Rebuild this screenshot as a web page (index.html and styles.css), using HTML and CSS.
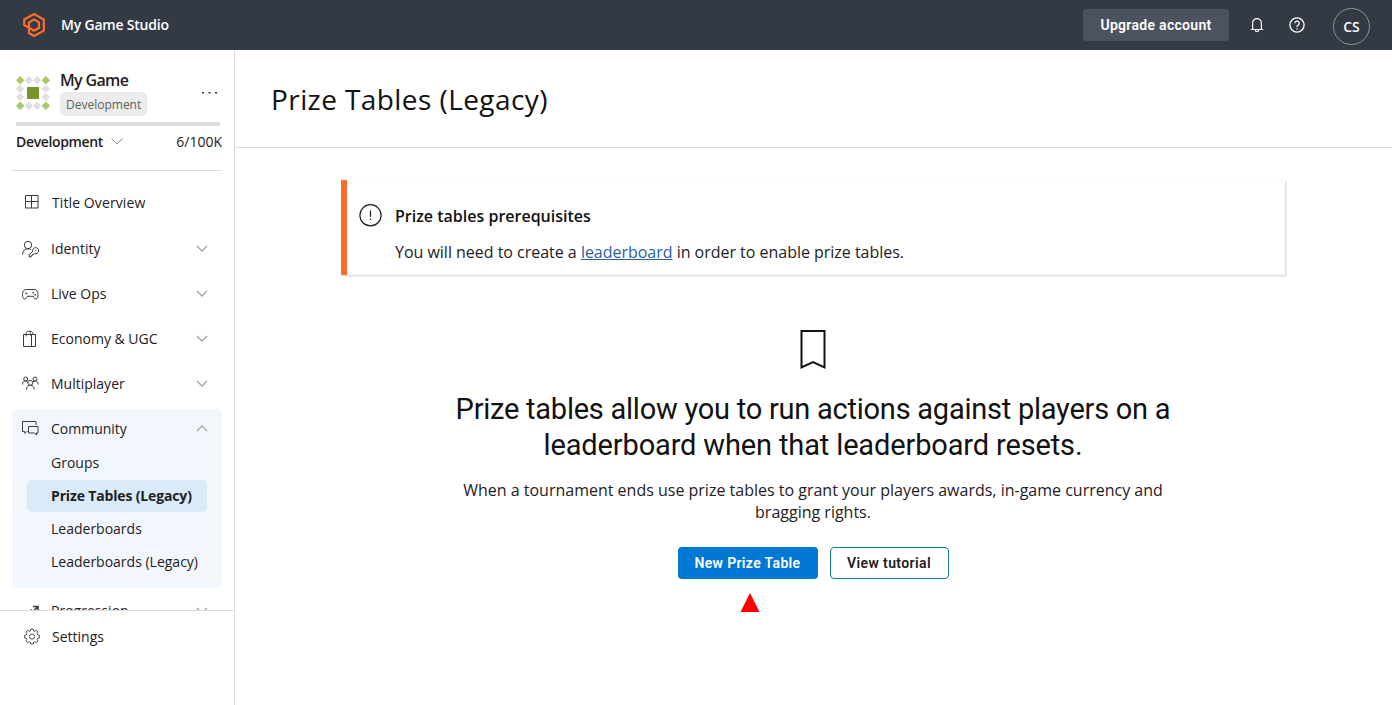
FILE: index.html
```html
<!DOCTYPE html>
<html lang="en">
<head>
    <meta charset="UTF-8">
    <meta name="viewport" content="width=device-width, initial-scale=1.0">
    <title>Prize Tables (Legacy) - My Game</title>
    <link rel="stylesheet" href="styles.css">
</head>
<body>
    <!-- Top bar -->
    <header class="topbar">
        <svg class="logo" width="24" height="26" viewBox="0 0 24 26" fill="none" stroke="#ff6c2c" stroke-width="2.2">
            <path d="M7 15.8l-4.8-2.700V7.500L12.200 2 21.800 7.600v11L12.200 24 7 21V10.300l5-2.900 5 2.900v5.500l-5 2.900-5-2.900"/>
        </svg>
        <span class="studio">My Game Studio</span>
        <button class="upgrade">Upgrade account</button>
        <svg class="bell" width="14" height="16" viewBox="0 0 14 16" fill="none" stroke="#fff" stroke-width="1.2">
            <path d="M2.6 12.4V6a4.4 4.4 0 0 1 8.8 0v6.4M.7 12.5h12.6M5.2 12.8a1.8 1.8 0 0 0 3.6 0"/>
        </svg>
        <svg class="help" width="16" height="16" viewBox="0 0 16 16" fill="none" stroke="#fff" stroke-width="1.3">
            <circle cx="8" cy="8" r="7.1"/>
            <path d="M5.8 6.3a2.2 2.2 0 1 1 3.3 1.9C8.3 8.7 8 9 8 9.9M8 11.2v1.3"/>
        </svg>
        <span class="avatar">CS</span>
    </header>

    <div class="page">
        <!-- Sidebar -->
        <aside class="sidebar">
            <div class="game">
                <svg width="34" height="34" viewBox="0 0 34 34">
                    <g fill="#e0e0e0">
                        <path d="M12.9 0l4.1 4.2-4.1 4.2-4.1-4.2zM21.1 0l4.1 4.2-4.1 4.2L17 4.2zM12.9 25.6l4.1 4.2-4.1 4.2-4.1-4.2zM21.1 25.6l4.1 4.2-4.1 4.2-4.1-4.2z"/>
                        <path d="M4.2 8.7l4.2 4.1-4.2 4.1L0 12.8zM4.2 17l4.2 4.1-4.2 4.1L0 21.1zM29.8 8.7l4.2 4.1-4.2 4.1-4.2-4.1zM29.8 17l4.2 4.1-4.2 4.1-4.2-4.1z"/>
                    </g>
                    <path fill="#a8c965" d="M4.2 0l4.2 4.2-4.2 4.2L0 4.2zM29.8 0L34 4.2l-4.2 4.2-4.2-4.2zM4.2 25.6l4.2 4.2L4.2 34 0 29.8zM29.8 25.6l4.2 4.2-4.2 4.2-4.2-4.2z"/>
                    <path fill="#76962d" d="M11 11h12v12H11z"/>
                </svg>
                <div class="game-info">
                    <div class="game-name">My Game</div>
                    <span class="badge">Development</span>
                </div>
                <svg class="more" width="16" height="4" viewBox="0 0 16 4" fill="#333">
                    <path d="M0 1h2v1.500H0zM6.500 1h2v1.500h-2zM13 1h2v1.500h-2z"/>
                </svg>
            </div>
            <div class="meter"></div>
            <div class="plan">
                <span class="plan-name">Development</span>
                <svg width="12" height="7" viewBox="0 0 12 7" fill="none" stroke="#888"><path d="M.5.5L6 6 11.5.5"/></svg>
                <span class="usage">6/100K</span>
            </div>

            <nav class="menu">
                <a class="item overview">
                    <svg class="icon" width="18" height="18" viewBox="0 0 18 18"><path d="M2.500 2.500h12.500v12.500H2.500zM8.500 2.500V15M2.500 8.500h12.500"/></svg>
                    <span>Title Overview</span>
                </a>
                <a class="item">
                    <svg class="icon" width="18" height="18" viewBox="0 0 18 18"><circle cx="6" cy="5" r="3.700"/><path d="M.5 14.500C.7 11 2.900 8.800 5.800 8.800c1.300 0 2.200.3 3 .9"/><path d="M10.700 11.200a3 3 0 1 1 2 2.300l-1.400 1.200h-1.200v1.200H8.900v1.100H7.200v-2z"/><path d="M13.300 10.300h.8"/></svg>
                    <span>Identity</span>
                    <svg class="chevron" width="12" height="7" viewBox="0 0 12 7"><path d="M1 1l5 5 5-5"/></svg>
                </a>
                <a class="item">
                    <svg class="icon" width="18" height="18" viewBox="0 0 18 18"><path d="M4.500 4.500h7.500c2.500 0 4 1.800 4 5 0 3-.9 4.500-2.300 4.500-1.500 0-1.600-1.400-2.400-2.700H5.200C4.400 12.600 4.300 14 2.800 14 1.400 14 .5 12.500.5 9.500c0-3.200 1.500-5 4-5z"/><path stroke-width="1.500" d="M3.500 8.500h1.600M10.500 7.800H12M12.500 9.700H14"/></svg>
                    <span>Live Ops</span>
                    <svg class="chevron" width="12" height="7" viewBox="0 0 12 7"><path d="M1 1l5 5 5-5"/></svg>
                </a>
                <a class="item">
                    <svg class="icon" width="18" height="18" viewBox="0 0 18 18"><path d="M1.500 4.500h12v12h-12zM9.500 4.500v12M4 6.500v-3C4 2 5 1.300 6.300 1.300h1.900c1.700 0 2.800.7 2.800 2.200v1M8.500 5.500v-2c0-1.200-.5-2-1.300-2.200"/></svg>
                    <span>Economy &amp; UGC</span>
                    <svg class="chevron" width="12" height="7" viewBox="0 0 12 7"><path d="M1 1l5 5 5-5"/></svg>
                </a>
                <a class="item">
                    <svg class="icon" width="18" height="18" viewBox="0 0 18 18"><circle cx="3.700" cy="4" r="2"/><circle cx="13" cy="4" r="2"/><circle cx="8.300" cy="7.800" r="2.500"/><path d="M.5 9.500c0-2.200 1.200-3.500 3-3.500.9 0 1.600.3 2.200.8M16.200 9.500c0-2.200-1.200-3.500-3-3.500-.9 0-1.600.3-2.200.8M4.500 14.500c0-2.600 1.300-4.200 3.800-4.200s3.900 1.600 3.900 4.200"/></svg>
                    <span>Multiplayer</span>
                    <svg class="chevron" width="12" height="7" viewBox="0 0 12 7"><path d="M1 1l5 5 5-5"/></svg>
                </a>
                <div class="group">
                    <a class="item">
                        <svg class="icon" width="18" height="18" viewBox="0 0 18 18"><path d="M5.500 12.500H4.800l-2 2v-2H.5v-10H14v3.500M6.500 7.500h9.500v6.500h-1.500v2l-2.200-2H6.500z"/></svg>
                        <span>Community</span>
                        <svg class="chevron" width="12" height="7" viewBox="0 0 12 7"><path d="M1 6l5-5 5 5"/></svg>
                    </a>
                    <a class="sub">Groups</a>
                    <a class="sub active">Prize Tables (Legacy)</a>
                    <a class="sub">Leaderboards</a>
                    <a class="sub">Leaderboards (Legacy)</a>
                </div>
                <a class="item">
                    <svg class="icon" width="18" height="18" viewBox="0 0 18 18"><path stroke-width="1.500" d="M11 4.500h5v5M16 4.500l-5 5-2-1.500-6 6"/></svg>
                    <span>Progression</span>
                    <svg class="chevron" width="12" height="7" viewBox="0 0 12 7"><path d="M1 1l5 5 5-5"/></svg>
                </a>
            </nav>
            <a class="settings">
                <svg class="icon" width="18" height="18" viewBox="0 0 20 20"><path d="M8.500 1.300h3l.4 2 1.200.5 1.800-1.200 2 2-1.200 1.800.5 1.200 2 .4v3l-2 .4-.5 1.200 1.200 1.800-2 2-1.800-1.200-1.200.5-.4 2h-3l-.4-2-1.200-.5-1.800 1.200-2-2 1.200-1.800-.5-1.200-2-.4V8l2-.4.5-1.200-1.200-1.800 2-2 1.800 1.200 1.200-.5z"/><circle cx="10" cy="9.500" r="2.900"/></svg>
                <span>Settings</span>
            </a>
        </aside>

        <!-- Content -->
        <main class="content">
            <div class="title-bar">
                <h1>Prize Tables (Legacy)</h1>
            </div>

            <section class="notice">
                <svg width="23" height="24" viewBox="0 0 23 24" fill="none" stroke="#222" stroke-width="1.2">
                    <circle cx="11.500" cy="12.300" r="10.600"/>
                    <path d="M11.500 7.500V14M11.500 15.500v1.600"/>
                </svg>
                <div>
                    <h2>Prize tables prerequisites</h2>
                    <p>You will need to create a <a href="#">leaderboard</a> in order to enable prize tables.</p>
                </div>
            </section>

            <section class="empty">
                <svg width="28" height="42" viewBox="0 0 28 42" fill="none" stroke="#111" stroke-width="2">
                    <path d="M2.500 2h23v36.500L14 33 2.500 38.500z"/>
                </svg>
                <h2><span class="line-one">Prize tables allow you to run actions against players on a</span><br><span class="line-two">leaderboard when that leaderboard resets.</span></h2>
                <p>When a tournament ends use prize tables to grant your players awards, in-game currency and bragging rights.</p>
                <div class="actions">
                    <button class="primary">New Prize Table</button>
                    <button class="secondary">View tutorial</button>
                </div>
                <svg class="pointer" width="20" height="19" viewBox="0 0 20 19"><path fill="#f00" d="M10 0l9.500 19H.5z"/></svg>
            </section>
        </main>
    </div>
</body>
</html>
```
FILE: styles.css
```css
* {
    margin: 0;
    padding: 0;
    box-sizing: border-box;
}

body {
    height: 100vh;
    overflow: hidden;
    background: #fff;
    color: #1f2023;
    font-family: "Open Sans", "Noto Sans", sans-serif;
    font-size: 14px;
}

svg {
    display: block;
    flex-shrink: 0;
}

button {
    font-family: Roboto, sans-serif;
    font-size: 14px;
    font-weight: 600;
    height: 32px;
    border-radius: 4px;
    cursor: pointer;
}

/* Top bar */
.topbar {
    display: flex;
    align-items: center;
    height: 50px;
    padding: 0 22px;
    background: #333a44;
    color: #fff;
}

.studio {
    margin-left: 15px;
    padding-bottom: 2px;
    font-weight: 600;
    letter-spacing: -0.2px;
}

.upgrade {
    width: 146px;
    margin-left: auto;
    border: none;
    background: #4c525e;
    color: #fff;
    letter-spacing: 0.3px;
}

.bell {
    margin-left: 21px;
}

.help {
    margin-left: 25px;
}

.avatar {
    width: 37px;
    height: 37px;
    margin: 3px 0 0 28px;
    border: 1px solid #8d9299;
    border-radius: 50%;
    font-weight: 600;
    line-height: 35px;
    text-align: center;
}

/* Sidebar */
.page {
    display: flex;
    height: calc(100vh - 50px);
}

.sidebar {
    display: flex;
    flex-direction: column;
    width: 235px;
    border-right: 1px solid #dcdcdc;
}

.game {
    display: flex;
    height: 72px;
    padding: 19px 16px 0;
}

.game > svg {
    margin-top: 7px;
}

.game-info {
    margin-left: 10px;
}

.game-name {
    height: 23px;
    font-size: 16px;
    font-weight: 600;
    letter-spacing: -0.65px;
    line-height: 22px;
}

.badge {
    display: block;
    width: 87px;
    height: 24px;
    padding: 0 6px;
    border-radius: 5px;
    background: #ececec;
    color: #5f5f5f;
    font-size: 12px;
    line-height: 25px;
}

.game .more {
    margin: 22px 0 0 auto;
}

.meter {
    height: 4px;
    margin: 0 14px 0 16px;
    background: #ddd;
}

.plan {
    display: flex;
    align-items: center;
    height: 45px;
    margin: 0 12px;
    padding: 0 0 13px 4px;
    border-bottom: 1px solid #dcdcdc;
}

.plan svg {
    margin-left: 8px;
}

.plan-name {
    font-weight: 600;
    letter-spacing: -0.35px;
}

.usage {
    margin-left: auto;
}

.menu {
    flex: none;
    height: 439px;
    padding: 9px 12px 0;
    overflow: hidden;
}

.item {
    display: flex;
    align-items: center;
    height: 45px;
    padding: 0 14px 0 10px;
}

.item span {
    margin-left: 11px;
}

.overview {
    height: 46px;
    padding-bottom: 2px;
}

.overview span {
    margin-left: 12px;
    letter-spacing: 0.1px;
}

.icon {
    fill: none;
    stroke: #3c3944;
    stroke-width: 1;
}

.overview .icon {
    margin: 0 -1px 0 1px;
}

.chevron {
    margin-left: auto;
    fill: none;
    stroke: #a3a3a3;
    stroke-width: 1.3;
}

.group {
    margin-top: 3px;
    padding-bottom: 10px;
    border-radius: 6px;
    background: #f2f7fe;
}

.group .item {
    height: 38px;
}

.sub {
    display: block;
    height: 32px;
    margin: 0 15px 1px;
    padding-left: 24px;
    border-radius: 5px;
    line-height: 31px;
    white-space: nowrap;
}

.group .sub:last-child {
    margin-bottom: 0;
}

.active {
    background: #d9eaf8;
    font-weight: 700;
    letter-spacing: -0.15px;
}

.settings {
    display: flex;
    align-items: center;
    height: 52px;
    padding-left: 23px;
    border-top: 1px solid #dcdcdc;
}

.settings span {
    margin-left: 11px;
}

/* Content */
.content {
    flex: 1;
}

.title-bar {
    height: 98px;
    padding-left: 36px;
    border-bottom: 1px solid #dcdcdc;
}

.title-bar h1 {
    color: #111;
    font-size: 28px;
    font-weight: 400;
    letter-spacing: 0.42px;
    line-height: 98px;
}

.notice {
    display: flex;
    width: 944px;
    height: 95px;
    margin: 32px 0 0 106px;
    padding: 23px 0 0 12px;
    border-left: 6px solid #ff6c2c;
    box-shadow: 1px 1px 2px rgba(0, 0, 0, 0.2);
}

.notice div {
    margin-left: 13px;
}

.notice h2 {
    color: #111;
    font-size: 16px;
    font-weight: 600;
    line-height: 26px;
}

.notice p {
    margin-top: 10px;
    font-size: 16px;
    letter-spacing: -0.02px;
    line-height: 26px;
}

.notice a {
    color: #2a5f9e;
}

.empty {
    display: flex;
    flex-direction: column;
    align-items: center;
    width: 720px;
    margin: 54px 0 0 218px;
    text-align: center;
}

.empty h2 {
    margin-top: 20px;
    color: #111;
    font-family: Roboto, sans-serif;
    font-size: 29px;
    font-weight: 400;
    line-height: 36px;
    white-space: nowrap;
}

.line-one {
    letter-spacing: -0.24px;
}

.line-two {
    letter-spacing: -0.14px;
}

.empty p {
    margin-top: 16px;
    font-size: 16px;
    line-height: 22px;
}

.actions {
    display: flex;
    gap: 12px;
    margin-top: 24px;
}

.primary {
    width: 140px;
    border: none;
    background: #0078d4;
    color: #fff;
    letter-spacing: 0.35px;
}

.secondary {
    width: 119px;
    border: 1px solid #147d8f;
    background: #fff;
    color: #222;
    letter-spacing: 0.4px;
}

.pointer {
    margin: 14px 126px 0 0;
}
```
